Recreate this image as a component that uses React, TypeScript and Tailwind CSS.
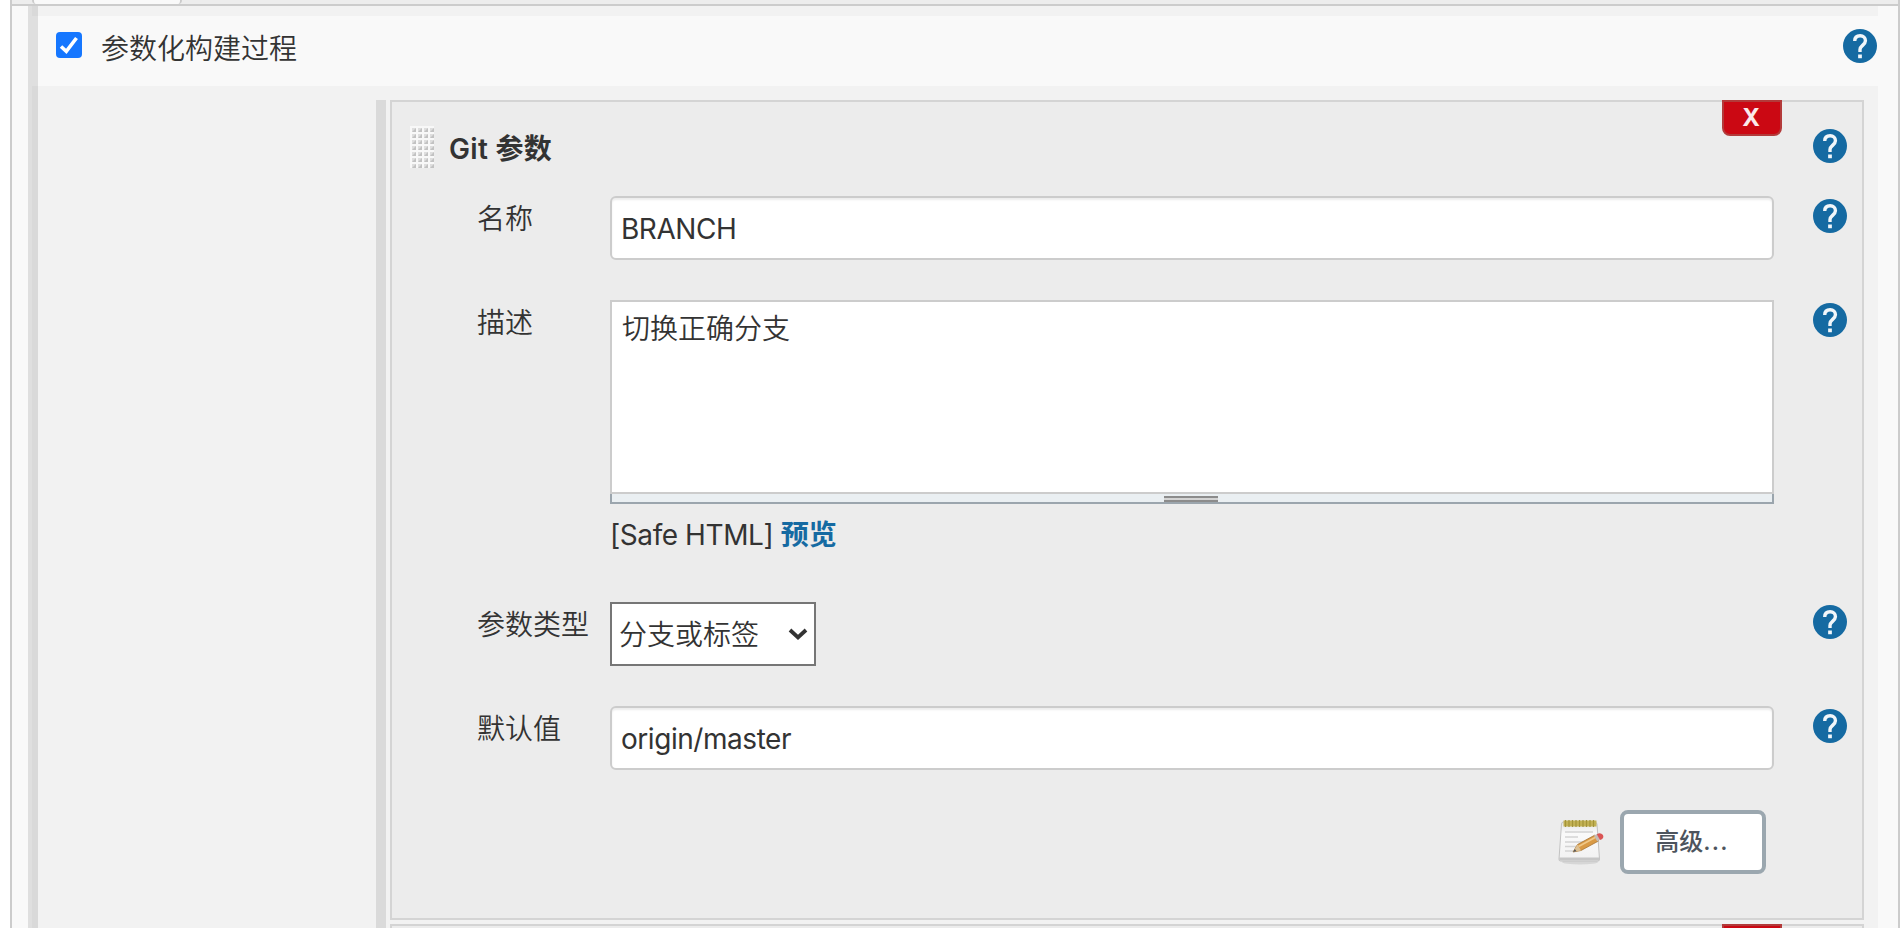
import type { ReactNode } from "react";

function HelpIcon({ className = "" }: { className?: string }) {
  return (
    <svg viewBox="0 0 100 100" className={`h-[34px] w-[34px] shrink-0 ${className}`}>
      <circle cx="50" cy="50" r="50" fill="#156aa2" />
      <path
        d="M34.500 35.500C34.500 25.500 41 20 50.500 20C60 20 66 26 66 34.500C66 46.500 50 49.500 50 60V67.500"
        fill="none"
        stroke="#f1f6fa"
        strokeWidth="10"
      />
      <rect x="44.500" y="75" width="11" height="11" fill="#f1f6fa" />
    </svg>
  );
}

function DragHandle() {
  const cells = Array.from({ length: 28 }, (_, i) => ({ x: (i % 4) * 6, y: Math.floor(i / 4) * 6 }));
  return (
    <svg viewBox="0 0 24 42" className="h-[42px] w-6 shrink-0">
      <rect width="24" height="42" fill="#f8f8f8" />
      {cells.map((c) => (
        <g key={`${c.x}-${c.y}`}>
          <rect x={c.x + 2} y={c.y + 2} width="4" height="4" fill="#dedede" />
          <path d={`M${c.x + 2} ${c.y + 6}L${c.x + 6} ${c.y + 2}V${c.y + 6}Z`} fill="#c2c2c2" />
        </g>
      ))}
    </svg>
  );
}

function NotepadIcon() {
  return (
    <svg viewBox="0 0 48 48" className="h-12 w-12">
      <defs>
        <linearGradient id="paper" x1="0" y1="0" x2="0" y2="1">
          <stop offset="0" stopColor="#e4e4e4" />
          <stop offset="0.3" stopColor="#fafafa" />
          <stop offset="1" stopColor="#f1f1f1" />
        </linearGradient>
      </defs>
      <ellipse cx="23" cy="44" rx="18" ry="2.500" fill="#d6d6d6" />
      <path d="M4.500 6Q4.500 4 6.500 4H37.500Q39.500 4 40 6L42.500 41Q42.500 43 41 43H3.500Q1.800 43 2 41Z" fill="url(#paper)" stroke="#c2c2c2" strokeWidth="1" />
      <path d="M2.300 39.500H42.300V42.500H2.300Z" fill="#c6c6c6" />
      <path d="M6.500 2.500H39.500V8.500H6.500Z" fill="#c3b254" />
      <path
        d="M8.500 2V9M12 2V9M15.500 2V9M19 2V9M22.500 2V9M26 2V9M29.500 2V9M33 2V9M36.500 2V9"
        stroke="#a3943a"
        strokeWidth="1.200"
      />
      <path d="M8 14H36M8 19H21M8 24H28M8 28.500H19M8 33H16" stroke="#d3d3d3" strokeWidth="1.600" />
      <path d="M16 34L20.500 26.500L38 17L41.500 23L24 32.500Z" fill="#d99a45" stroke="#a87535" strokeWidth="0.800" />
      <path d="M21.500 28.500L39 19" stroke="#f0c888" strokeWidth="1.800" />
      <path d="M16 34L20.500 26.500L24 32.500Z" fill="#dcc093" />
      <path d="M16 34L17.800 31L19.500 33.200Z" fill="#555" />
      <path d="M37 17.500L40 16L43 21.500L40.300 23.500Z" fill="#c3bcb8" />
      <path d="M39.800 16.200Q43.500 14 46 17Q47.500 20.500 43 22Z" fill="#da5454" />
    </svg>
  );
}

function Field({ label, className, children }: { label: string; className: string; children: ReactNode }) {
  return (
    <div className={`flex items-start ${className}`}>
      <div className="mt-[2px] w-[133px] shrink-0 whitespace-nowrap">{label}</div>
      <div className="w-[1164px] shrink-0">{children}</div>
      <HelpIcon className="mt-[3px] ml-[39px]" />
    </div>
  );
}

function TextInput({ value }: { value: string }) {
  return (
    <input
      readOnly
      value={value}
      className="block h-16 w-full rounded-md border-2 border-[#ccc] bg-white px-[9px] pt-px font-normal tracking-[-0.45px] shadow-[inset_0_2px_2px_rgba(0,0,0,0.075)] outline-none"
    />
  );
}

function DeleteButton({ label }: { label?: string }) {
  return (
    <button className="absolute -top-[2px] right-[80px] flex h-9 w-[60px] items-center justify-center rounded-b-lg border-2 border-[#b33a3a] bg-[#cb0813] pr-[2px] text-[24px] leading-none font-bold text-[#fbe9ea]">
      {label}
    </button>
  );
}

export default function App() {
  return (
    <div className="flex h-[928px] w-[1902px] overflow-hidden bg-white pr-[2px] pl-[10px] font-['Inter','Noto_Sans_CJK_SC',sans-serif] text-[28px] leading-[42px] font-[350] text-[#333]">
      <div className="flex w-[1890px] flex-col border-x-2 border-[#ccc] bg-[#f9f9f9]">
        <div className="h-[6px] shrink-0 border-b-2 border-[#ccc] bg-[#ededed] pl-5">
          <div className="h-1 w-[150px] rounded-b-sm border-x-2 border-[#ccc] bg-[#f9f9f9]" />
        </div>

        <div className="relative flex min-h-0 grow flex-col pr-5 pl-5">
          <div className="absolute inset-y-0 left-4 w-[10px] bg-black/10" />
          <div className="h-[10px] shrink-0 bg-[#f2f2f2]" />

          <div className="flex h-[70px] shrink-0 items-start">
            <span className="mt-4 ml-6 flex h-[26px] w-[26px] items-center justify-center rounded-[4px] bg-[#1677ff]">
              <svg viewBox="0 0 26 26" className="h-[26px] w-[26px]">
                <path d="M5 14.500L10.300 19.300L20.500 6" fill="none" stroke="#fff" strokeWidth="3.600" />
              </svg>
            </span>
            <span className="mt-3 ml-[19px]">参数化构建过程</span>
            <HelpIcon className="mt-[13px] mr-[1px] ml-auto" />
          </div>

          <div className="flex min-h-0 grow bg-[#f2f2f2] pt-[14px] pr-[14px] pl-[344px]">
            <div className="w-[10px] shrink-0 bg-[#dadada]" />
            <div className="ml-1 flex min-w-0 grow flex-col gap-1">
              <section className="relative h-[820px] shrink-0 border-2 border-[#d4d4d4] bg-[#ececec] pl-[18px]">
                <DeleteButton label="X" />
                <div className="flex items-start pt-6">
                  <DragHandle />
                  <h2 className="mt-[2px] -mb-[2px] ml-[15px] font-semibold tracking-[0.3px]">Git 参数</h2>
                  <HelpIcon className="mt-[3px] mr-[15px] ml-auto" />
                </div>
                <div className="pl-[67px]">
                  <Field label="名称" className="mt-[28px] h-[104px]">
                    <TextInput value="BRANCH" />
                  </Field>
                  <Field label="描述" className="h-[302px]">
                    <textarea
                      readOnly
                      value="切换正确分支"
                      className="block h-[194px] w-full resize-none border-2 border-[#ccc] bg-white px-[10px] pt-[6px] outline-none"
                    />
                    <div className="flex h-[10px] justify-center border-2 border-t-0 border-[#9ba5ad] bg-[#eaeff2] pt-[2px] pr-[2px]">
                      <div className="h-[6px] w-[54px] border-y-2 border-[#8c8c8c] bg-[#d4d4d4]" />
                    </div>
                    <div className="mt-[10px] font-normal tracking-[-0.42px]">
                      [Safe HTML] <a className="font-semibold tracking-normal text-[#156aa2]">预览</a>
                    </div>
                  </Field>
                  <Field label="参数类型" className="h-[104px]">
                    <div className="flex h-16 w-[206px] items-center border-2 border-[#767676] bg-white pl-[7px]">
                      <span className="mt-px">分支或标签</span>
                      <svg viewBox="0 0 20 14" className="ml-[29px] h-[14px] w-5">
                        <path d="M2 3L10 10.500L18 3" fill="none" stroke="#333" strokeWidth="3.800" />
                      </svg>
                    </div>
                  </Field>
                  <Field label="默认值" className="h-[104px]">
                    <TextInput value="origin/master" />
                  </Field>
                </div>
                <div className="flex items-center justify-end gap-[15px] pr-[96px]">
                  <NotepadIcon />
                  <button className="h-16 w-[146px] rounded-lg border-4 border-[#9ba7af] bg-white pr-[2px] text-[24px] font-medium text-[#4d545d]">
                    高级<span className="tracking-[1.2px]">...</span>
                  </button>
                </div>
              </section>
              <section className="relative h-[820px] shrink-0 border-2 border-[#d4d4d4] bg-[#ececec]">
                <DeleteButton />
              </section>
            </div>
          </div>
        </div>
      </div>
    </div>
  );
}
